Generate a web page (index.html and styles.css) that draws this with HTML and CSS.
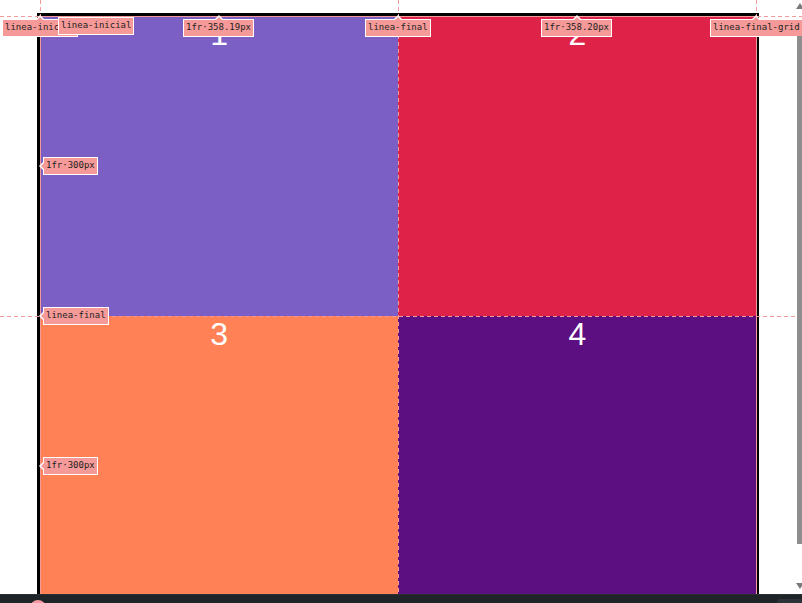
FILE: index.html
```html
<!DOCTYPE html>
<html lang="es">
<head>
<meta charset="utf-8">
<title>Grid</title>
<link rel="stylesheet" href="styles.css">
</head>
<body>
<main class="page">
  <div class="grid">
    <div class="cell c1">1</div>
    <div class="cell c2">2</div>
    <div class="cell c3">3</div>
    <div class="cell c4">4</div>
  </div>
</main>

<div class="overlay">
  <div class="outline"></div>
  <div class="vl vl-a"></div>
  <div class="vl vl-b"></div>
  <div class="vl vl-c"></div>
  <div class="hl hl-a"></div>
  <div class="hl hl-b"></div>
  <div class="hl hl-c"></div>

  <div class="lbl up l1">linea-inicial</div>
  <div class="lbl l2">linea-inicial</div>
  <div class="lbl up l3">1fr·358.19px</div>
  <div class="lbl up l4">linea-final</div>
  <div class="lbl up l5">1fr·358.20px</div>
  <div class="lbl up l6">linea-final-grid</div>
  <div class="lbl left l7">1fr·300px</div>
  <div class="lbl left l8">linea-final</div>
  <div class="lbl left l9">1fr·300px</div>
</div>

<div class="scrollbar">
  <div class="arrow-up"></div>
  <div class="thumb"></div>
  <div class="arrow-down"></div>
</div>

<div class="devbar">
  <div class="dot"></div>
  <div class="tab"></div>
</div>
</body>
</html>
```

FILE: styles.css
```css
html, body {
  margin: 0;
  padding: 0;
  height: 603px;
  overflow: hidden;
  background: #ffffff;
}

.page {
  padding: 13px 0 0 37px;
}

.grid {
  width: 716.39px;
  display: grid;
  grid-template-columns: 1fr 1fr;
  grid-template-rows: 300px 300px;
  border: 3px solid #000;
}

.cell {
  color: #fff;
  text-align: center;
  font-family: "Liberation Sans", Arial, sans-serif;
  font-size: 32px;
  line-height: normal;
}

.c1 { background: #7b5fc5; }
.c2 { background: #df2248; }
.c3 { background: #ff8155; }
.c4 { background: #5c0f80; }

/* overlay */
.overlay {
  position: absolute;
  inset: 0;
  pointer-events: none;
}

.outline {
  position: absolute;
  left: 40px;
  top: 16px;
  width: 715px;
  height: 600px;
  border: 1px solid #f29a9a;
}

.vl {
  position: absolute;
  width: 1px;
  background: repeating-linear-gradient(to bottom, #f29a9a 0 4px, transparent 4px 7px);
}
.vl-a { left: 40px; top: 0; height: 16px; }
.vl-b { left: 398px; top: 0; height: 603px; }
.vl-c { left: 756px; top: 0; height: 16px; }

.hl {
  position: absolute;
  height: 1px;
  background: repeating-linear-gradient(to right, #f29a9a 0 4px, transparent 4px 7px);
}
.hl-a { left: 0; top: 16px; width: 40px; }
.hl-b { left: 757px; top: 16px; width: 45px; }
.hl-c { left: 0; top: 316px; width: 802px; }

.lbl {
  position: absolute;
  background: #f59a98;
  border: 1px solid #fff;
  color: #1e1e1e;
  font-family: "DejaVu Sans Mono", "Liberation Mono", monospace;
  font-size: 9px;
  line-height: 13px;
  padding: 1px 2px 2px;
  white-space: nowrap;
}

.lbl.up::before,
.lbl.up::after {
  content: "";
  position: absolute;
  left: 50%;
  width: 0;
  height: 0;
  border-style: solid;
  border-color: transparent;
}
.lbl.up::before {
  top: -5px;
  margin-left: -4px;
  border-width: 0 4px 4px 4px;
  border-bottom-color: #fff;
}
.lbl.up::after {
  top: -3px;
  margin-left: -3px;
  border-width: 0 3px 3px 3px;
  border-bottom-color: #f59a98;
}

.lbl.left::before,
.lbl.left::after {
  content: "";
  position: absolute;
  top: 50%;
  width: 0;
  height: 0;
  border-style: solid;
  border-color: transparent;
}
.lbl.left::before {
  left: -5px;
  margin-top: -4px;
  border-width: 4px 4px 4px 0;
  border-right-color: #fff;
}
.lbl.left::after {
  left: -3px;
  margin-top: -3px;
  border-width: 3px 3px 3px 0;
  border-right-color: #f59a98;
}

.l1 { left: 2px; top: 19px; }
.l2 { left: 58px; top: 17px; }
.l3 { left: 183px; top: 19px; }
.l4 { left: 365px; top: 19px; }
.l5 { left: 541px; top: 19px; }
.l6 { left: 710px; top: 19px; }
.l7 { left: 43px; top: 157px; }
.l8 { left: 43px; top: 307px; }
.l9 { left: 43px; top: 457px; }

/* fake scrollbar */
.scrollbar {
  position: absolute;
  right: 0;
  top: 0;
  width: 6px;
  height: 595px;
}
.thumb {
  position: absolute;
  left: 1px;
  top: 36px;
  width: 5px;
  height: 508px;
  background: #8e8e8e;
}
.arrow-up {
  position: absolute;
  left: 0;
  top: 3px;
  width: 0;
  height: 0;
  border-style: solid;
  border-color: transparent;
  border-width: 0 4px 6px 4px;
  border-bottom-color: #7a7a7a;
}
.arrow-down {
  position: absolute;
  left: 0;
  top: 583px;
  width: 0;
  height: 0;
  border-style: solid;
  border-color: transparent;
  border-width: 6px 4px 0 4px;
  border-top-color: #7a7a7a;
}

/* bottom devtools strip */
.devbar {
  position: fixed;
  left: 0;
  right: 0;
  bottom: 0;
  height: 8px;
  background: #1f2429;
  border-top: 1px solid #2b3036;
  overflow: hidden;
}
.dot {
  position: absolute;
  left: 30px;
  top: 5px;
  width: 16px;
  height: 16px;
  border-radius: 50%;
  background: #f29aa0;
}
.tab {
  position: absolute;
  left: 777px;
  top: 4px;
  width: 25px;
  height: 10px;
  background: #2c3237;
  border-radius: 3px 0 0 0;
}
```
